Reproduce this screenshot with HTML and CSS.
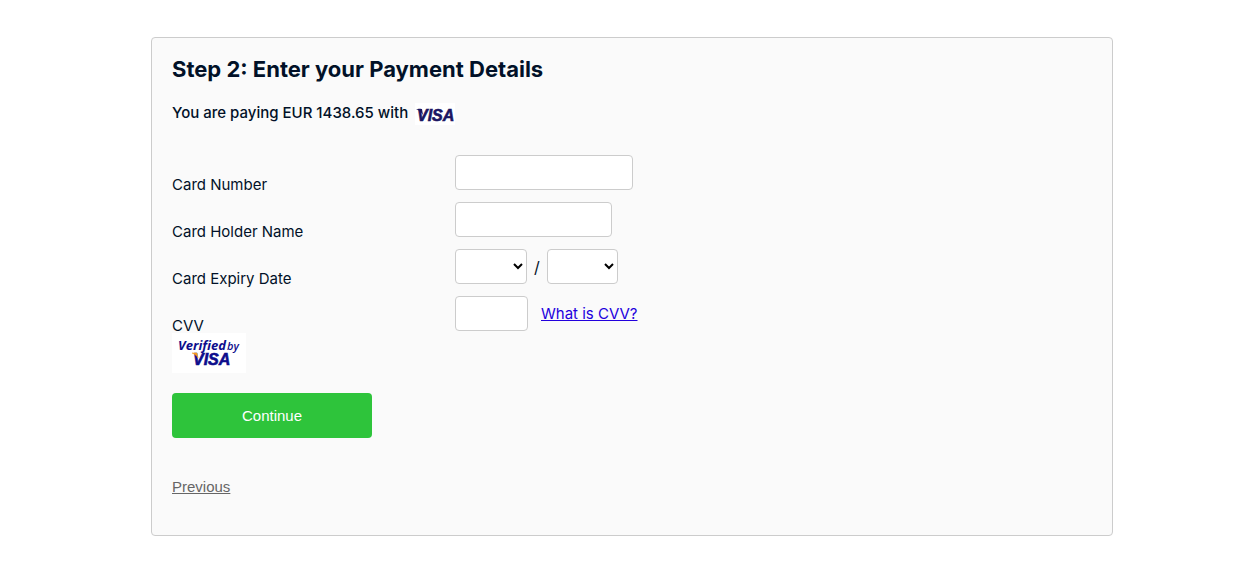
FILE: index.html
```html
<!DOCTYPE html>
<html lang="en">
<head>
<meta charset="utf-8">
<title>Payment Details</title>
<link rel="stylesheet" href="styles.css">
</head>
<body>
<main class="panel">
  <h1 class="title">Step 2: Enter your Payment Details</h1>
  <p class="summary">
    <span>You are paying EUR 1438.65 with</span>
    <svg class="visa" viewBox="0 0 40 22" role="img" aria-label="Visa">
      <rect width="40" height="22" fill="#fff"/>
      <text class="visa-text navy" x="2" y="18">VISA</text>
      <path d="M1 6h6l1 6C6 9 4 7 1 6z" fill="#1a1562"/>
    </svg>
  </p>
  <form>
    <div class="fields">
      <div class="row">
        <label class="label" for="number">Card Number</label>
        <div class="control"><input class="input number" id="number" type="text"></div>
      </div>
      <div class="row">
        <label class="label" for="holder">Card Holder Name</label>
        <div class="control"><input class="input holder" id="holder" type="text"></div>
      </div>
      <div class="row">
        <label class="label" for="month">Card Expiry Date</label>
        <div class="control">
          <select class="input month" id="month"><option></option></select>
          <span class="slash">/</span>
          <select class="input year" aria-label="Expiry year"><option></option></select>
        </div>
      </div>
      <div class="row">
        <label class="label" for="cvv">CVV</label>
        <div class="control">
          <input class="input cvv" id="cvv" type="text">
          <a class="help" href="#">What is CVV?</a>
        </div>
      </div>
    </div>
    <svg class="verified" viewBox="0 0 74 40" role="img" aria-label="Verified by Visa">
      <rect width="74" height="40" fill="#fff"/>
      <text class="verified-text" x="6" y="17">Verified</text>
      <text class="by-text" x="55" y="17">by</text>
      <text class="visa-text blue" x="21" y="32">VISA</text>
      <path d="M20 20h5l1 5C25 23 23 21 20 20z" fill="#f79a1c" stroke="#f79a1c" stroke-width="0.5"/>
    </svg>
    <button class="submit" type="submit">Continue</button>
    <a class="previous" href="#">Previous</a>
  </form>
</main>
</body>
</html>
```
FILE: styles.css
```css
* {
  box-sizing: border-box;
}

body {
  margin: 0;
  padding: 37px 135px 52px 151px;
  background: #fff;
  color: #011128;
  font-family: Inter, sans-serif;
  font-size: 15px;
  line-height: 16px;
}

.panel {
  padding: 16px 20px 39px;
  border: 1px solid #ccc;
  border-radius: 4px;
  background: #fafafa;
}

.title {
  margin: 0 0 19px;
  font-size: 22px;
  font-weight: 700;
  line-height: 30px;
}

.summary {
  display: flex;
  align-items: flex-start;
  gap: 7px;
  margin: 0 0 30px;
  font-weight: 500;
  line-height: 20px;
}

.visa {
  width: 40px;
  height: 22px;
}

.visa-text {
  font: italic 700 16px "Liberation Sans", Arial, sans-serif;
  stroke-width: 0.6px;
}

.navy {
  fill: #1a1562;
  stroke: #1a1562;
}

.blue {
  fill: #0d0d8c;
  stroke: #0d0d8c;
}

.fields {
  display: grid;
  gap: 10px;
}

.row {
  display: grid;
  grid-template-columns: 283px 1fr;
}

.label {
  padding-top: 22px;
  line-height: 15px;
}

.control {
  display: flex;
  align-items: center;
  height: 35px;
}

.input {
  height: 35px;
  margin: 0;
  padding: 0 8px;
  border: 1px solid #ccc;
  border-radius: 4px;
  background: #fff;
  color: #000;
  font: 14px Inter, sans-serif;
}

select.input {
  padding: 0;
}

.number {
  width: 178px;
}

.holder {
  width: 157px;
}

.month {
  width: 72px;
}

.year {
  width: 71px;
}

.cvv {
  width: 73px;
}

.slash {
  width: 20px;
  font-size: 16px;
  text-align: center;
}

.help {
  margin-left: 13px;
  color: #2200dd;
}

.verified {
  display: block;
  width: 74px;
  height: 40px;
}

.verified-text {
  fill: #0d0d8c;
  font: italic 700 13px "Open Sans", sans-serif;
}

.by-text {
  fill: #0d0d8c;
  font: italic 600 11px "Open Sans", sans-serif;
}

.submit {
  display: block;
  width: 200px;
  height: 45px;
  margin: 20px 0 40px;
  padding: 0;
  border: 0;
  border-radius: 4px;
  background: #2ec43b;
  color: #fff;
  font: 15px "Liberation Sans", Arial, sans-serif;
}

.previous {
  display: inline-block;
  color: #666;
  font-family: "Liberation Sans", Arial, sans-serif;
  line-height: 18px;
}
```
